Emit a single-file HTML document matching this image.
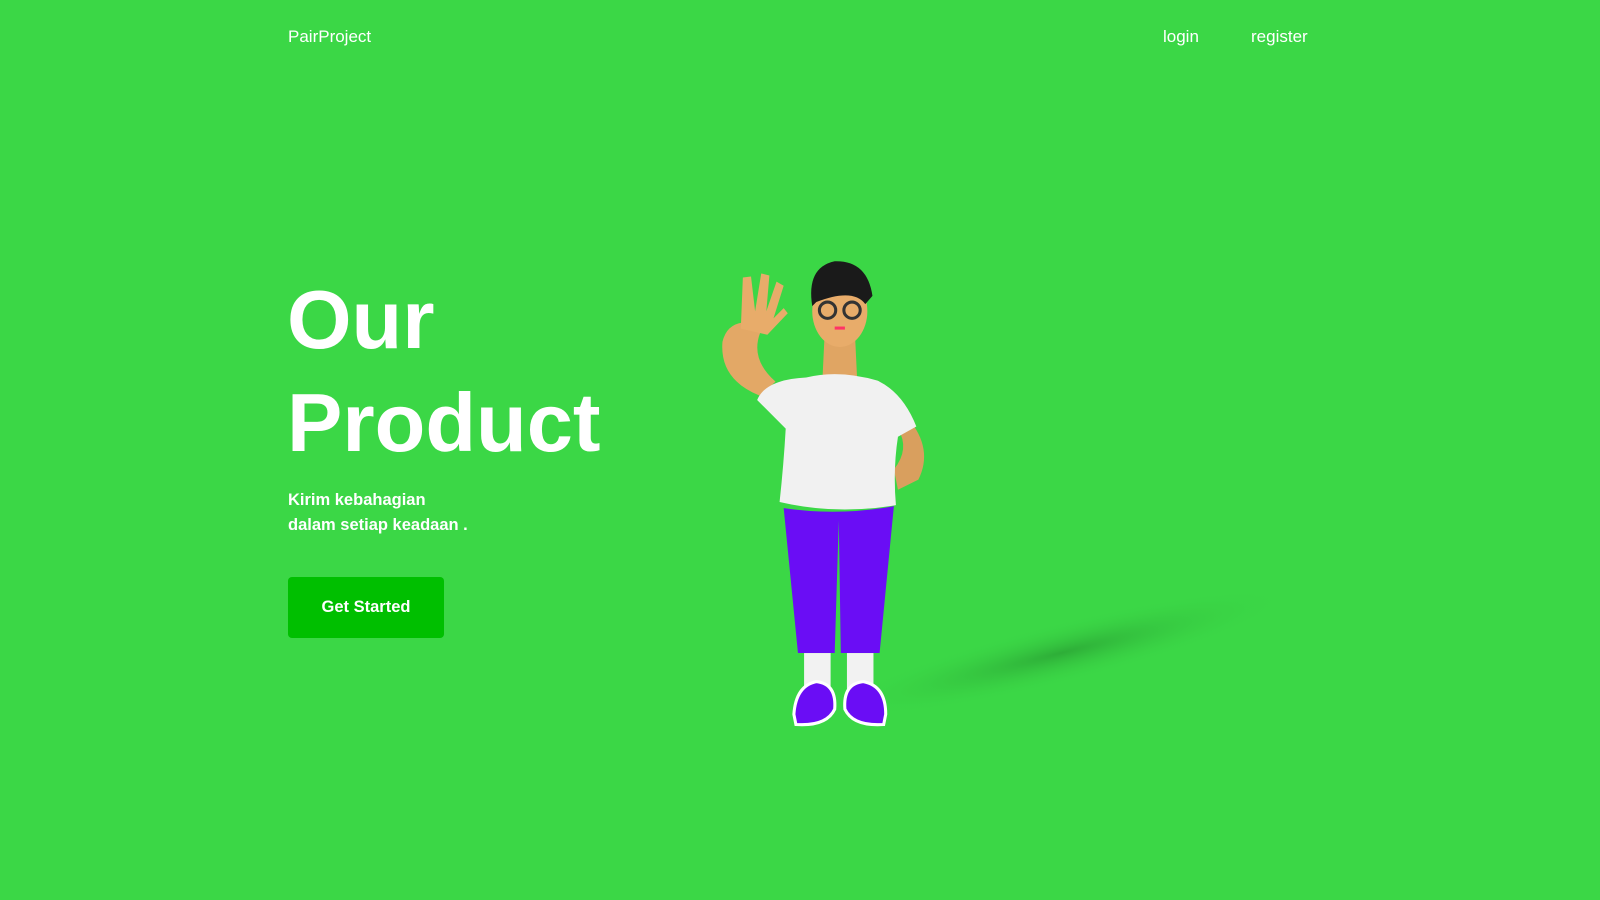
<!DOCTYPE html>
<html><head><style>
html,body{margin:0;padding:0;width:1600px;height:900px;overflow:hidden;background:#3bd746;font-family:"Liberation Sans",sans-serif;color:#fff}
.a{position:absolute}
.nav{font-size:17px;top:27px}
h1{position:absolute;left:287px;top:268px;margin:0;font-size:83px;font-weight:700;line-height:103px;letter-spacing:0}
.sub{left:288px;top:488px;font-size:16.5px;line-height:25px;font-weight:600}
.btn{left:288px;top:577px;width:156px;height:61px;background:#00bf00;border-radius:4px;font-size:16.5px;font-weight:600;text-align:center;line-height:61px}
svg{position:absolute;left:0;top:0}
</style></head><body>
<div class="a nav" style="left:288px">PairProject</div>
<div class="a nav" style="left:1163px">login</div>
<div class="a nav" style="left:1251px">register</div>
<h1>Our<br>Product</h1>
<div class="a sub">Kirim kebahagian<br>dalam setiap keadaan .</div>
<div class="a btn">Get Started</div>
<svg width="1600" height="900" viewBox="0 0 1568 882">
<defs><radialGradient id="sh" cx="0.5" cy="0.5" r="0.5"><stop offset="0" stop-color="#2aa334" stop-opacity="0.8"/><stop offset="1" stop-color="#3bd746" stop-opacity="0"/></radialGradient></defs>
<ellipse cx="1040" cy="640" rx="230" ry="30" fill="url(#sh)" transform="rotate(-14 1040 640)"/>
<path d="M745 388 Q705 372 708 335 Q712 318 728 316 L745 326 Q735 352 760 374Z" fill="#e3a866"/>
<path d="M726 322 L728 272 L736 271 L740 305 L746 268 L754 270 L751 305 L761 276 L768 280 L758 312 L768 302 L772 307 L752 328Z" fill="#e8ac6a"/>
<path d="M890 410 Q915 440 900 470 L880 480 L876 460 Q892 440 880 420Z" fill="#d99f5e"/>
<path d="M808 330 L838 330 L840 372 L806 372Z" fill="#e0a563"/>
<ellipse cx="823" cy="305" rx="27" ry="35" fill="#e8ac6a"/>
<path d="M796 300 Q790 262 818 256 Q850 255 855 290 L848 298 Q836 282 800 296Z" fill="#1a1a1a"/>
<circle cx="811" cy="304" r="8" fill="none" stroke="#333" stroke-width="3"/>
<circle cx="835" cy="304" r="8" fill="none" stroke="#333" stroke-width="3"/>
<rect x="818" y="320" width="10" height="3" fill="#f36"/>
<path d="M790 370 Q822 362 860 373 Q885 385 898 418 L880 428 Q875 460 878 495 Q820 505 764 492 Q768 455 770 420 L750 400 L742 392 Q750 372 790 370Z" fill="#f1f1f1"/>
<path d="M768 498 Q822 506 876 496 L862 640 L824 640 L822 510 L818 640 L782 640Z" fill="#6a0df5"/>
<rect x="788" y="640" width="26" height="35" fill="#f2f2f2"/>
<rect x="830" y="640" width="26" height="35" fill="#f2f2f2"/>
<path d="M778 700 Q780 672 800 668 Q820 670 818 695 Q810 712 780 710Z" fill="#6a0df5" stroke="#fff" stroke-width="3"/>
<path d="M828 695 Q826 670 846 668 Q868 672 868 700 L866 710 Q836 712 828 695Z" fill="#6a0df5" stroke="#fff" stroke-width="3"/>
</svg>
</body></html>
